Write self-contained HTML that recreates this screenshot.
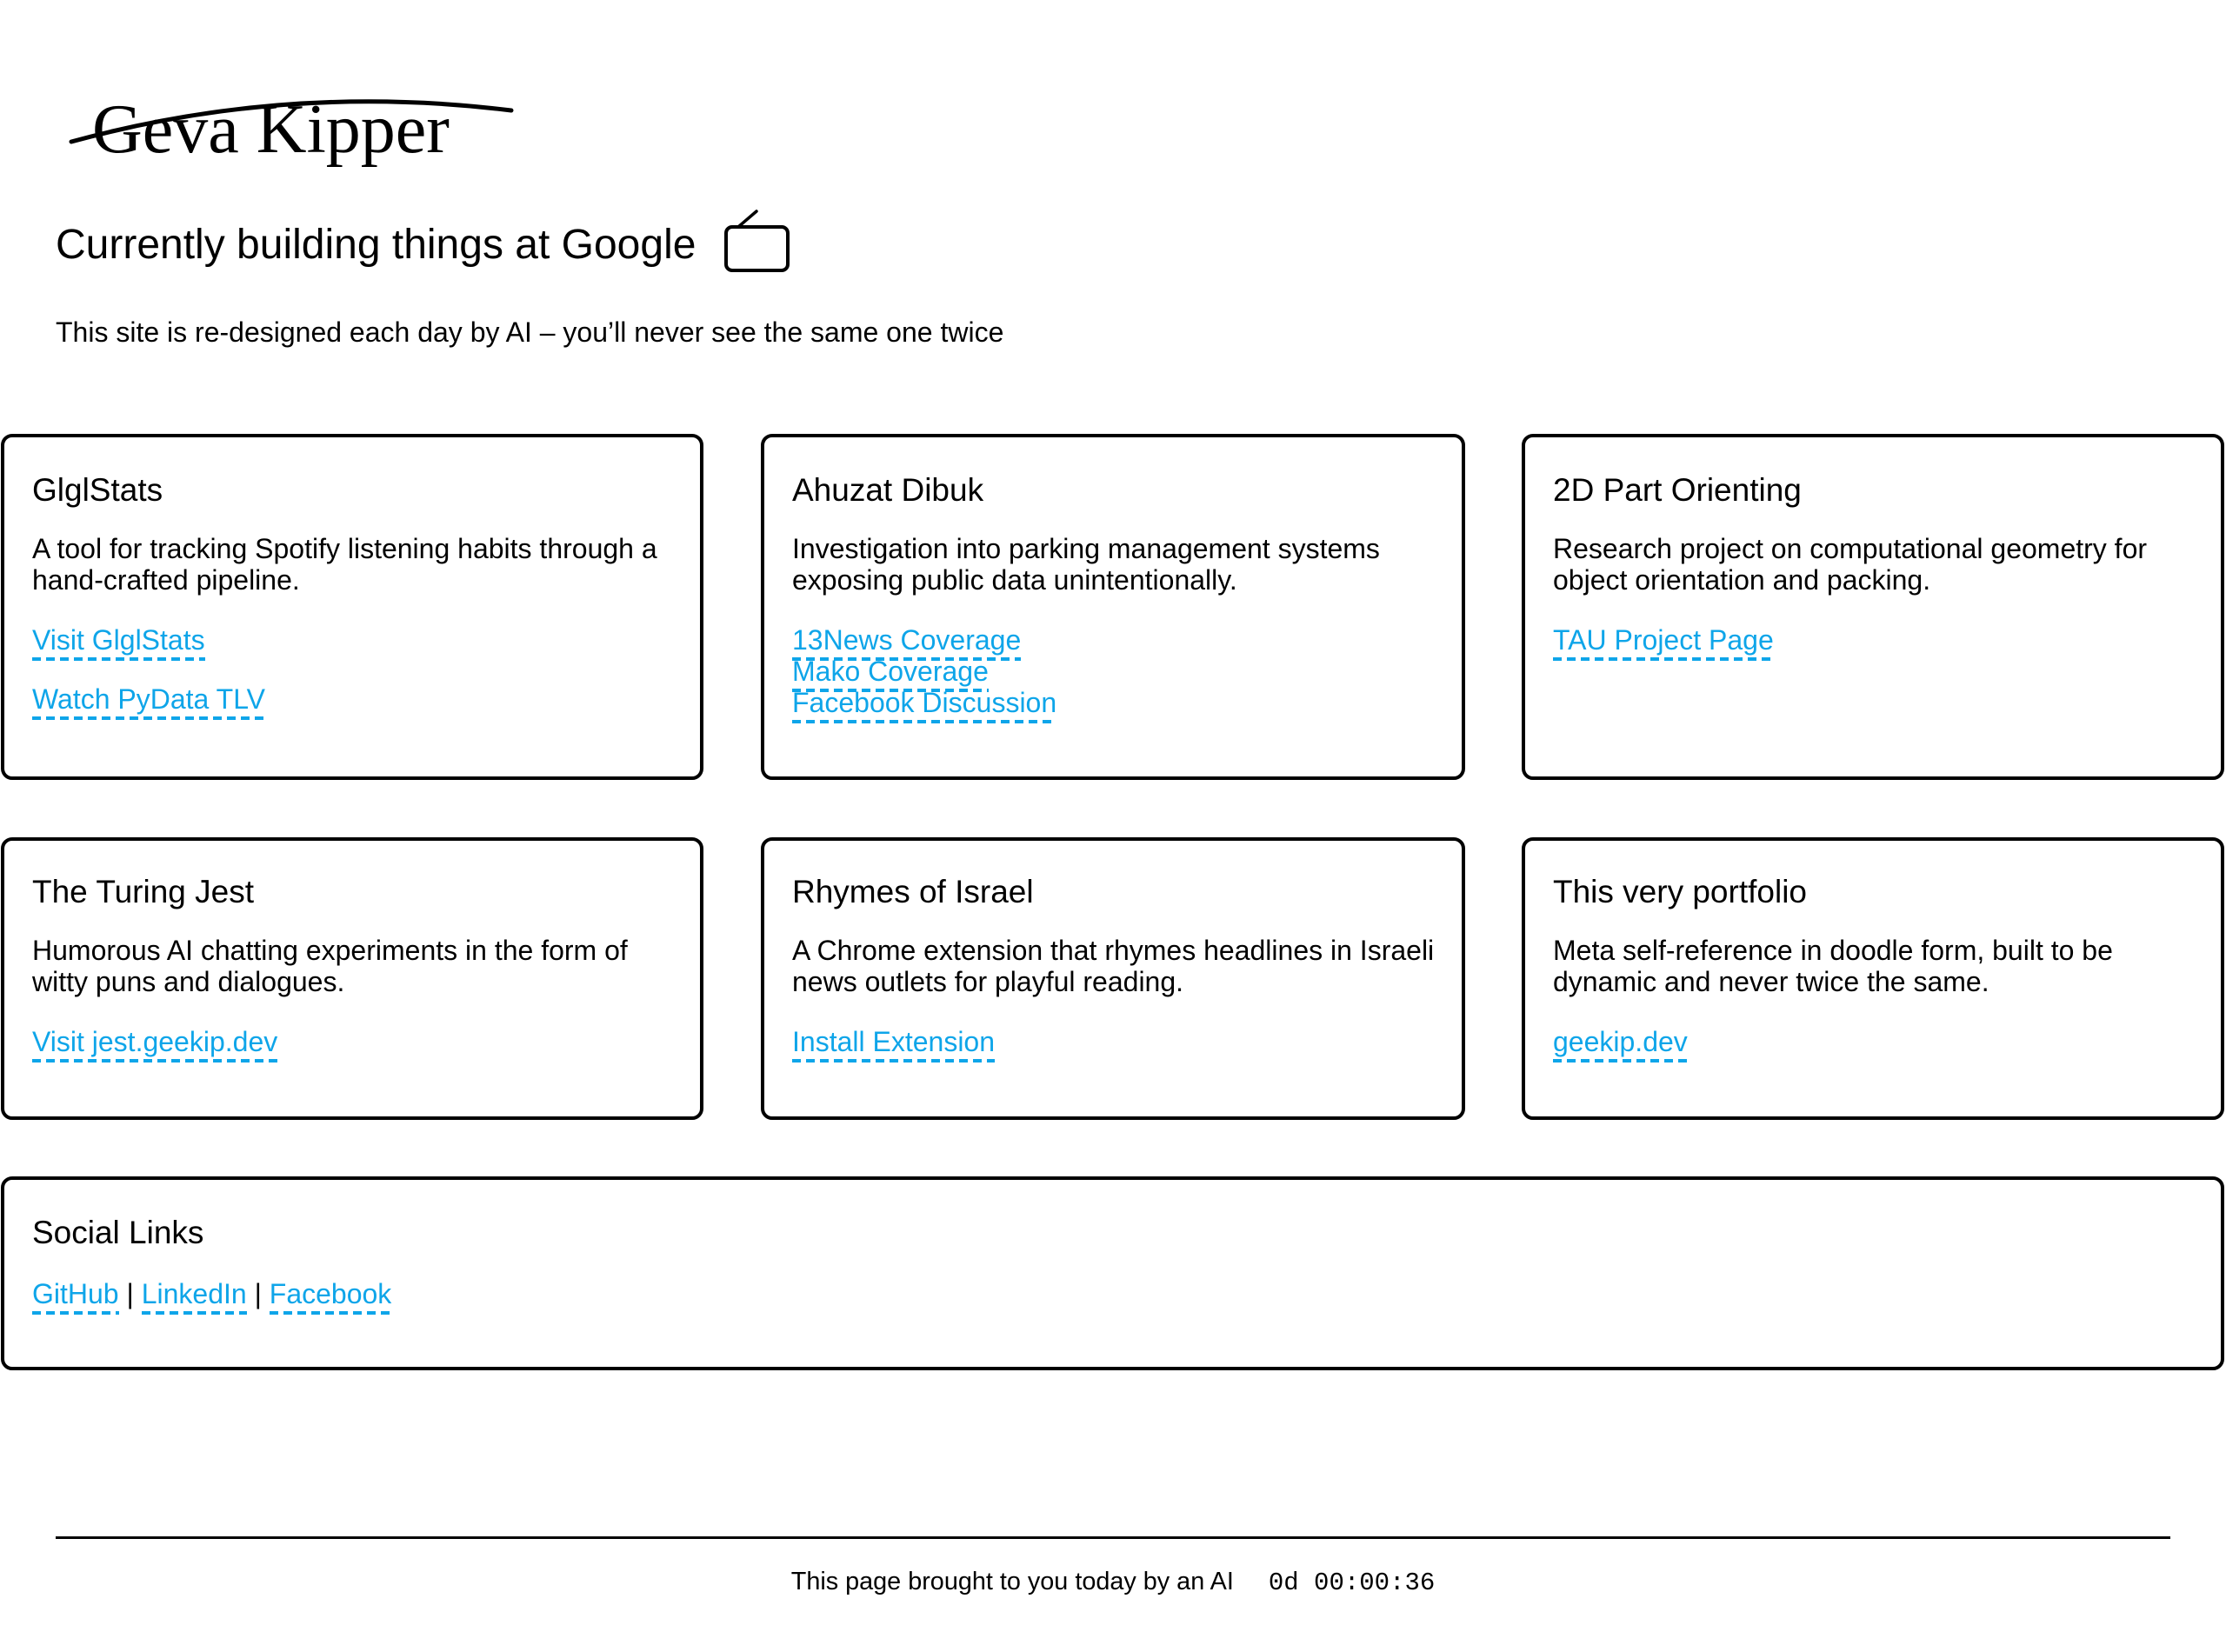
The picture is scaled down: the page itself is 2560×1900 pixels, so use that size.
<!DOCTYPE html>
<html><head><meta charset="utf-8"><style>
html,body{margin:0;padding:0;background:#fff;width:2560px;height:1900px;overflow:hidden;position:relative;font-family:"Liberation Sans",sans-serif;color:#000}
.abs{position:absolute}
.title{left:106px;top:109px;font-family:"Liberation Serif",serif;font-size:80px;line-height:1;white-space:nowrap}
.sub{left:64px;top:258px;font-size:48px;line-height:1;white-space:nowrap}
.desc{left:64px;top:366px;font-size:32px;line-height:1;white-space:nowrap}
.card{position:absolute;box-sizing:border-box;border:4px solid #000;border-radius:13px;padding:42px 20px 0 32px}
.card h3{margin:0;font-weight:normal;font-size:37px;line-height:1;white-space:nowrap}
.card p{margin:31px 0 0 0;font-size:32px;line-height:36px}
.card .links{margin-top:33px;font-size:32px;line-height:36px}
a{color:#0ea5e9;text-decoration:none;padding-bottom:6px;background:repeating-linear-gradient(90deg,#0ea5e9 0 10px,transparent 10px 16px) left bottom/100% 4px no-repeat}
.lk{display:block}
.lk+.lk{margin-top:32px}
.foot{left:64px;width:2432px;top:1767px;height:3px;background:#000}
.ft{left:0;width:2560px;top:1804px;text-align:center;font-size:28.8px;line-height:30px;white-space:nowrap}
.ft span{font-family:"Liberation Mono",monospace;font-size:29px;margin-left:40px}
</style></head><body>
<div class="abs title">Geva Kipper</div>
<svg class="abs" style="left:0;top:0" width="1000" height="330" viewBox="0 0 1000 330">
<path d="M82 163 Q330 95 588 127" fill="none" stroke="#000" stroke-width="5" stroke-linecap="round"/>
<rect x="835" y="261" width="71" height="50" rx="7" fill="none" stroke="#000" stroke-width="4"/>
<path d="M849 261 L870 243" stroke="#000" stroke-width="3.5" stroke-linecap="round"/>
</svg>
<div class="abs sub">Currently building things at Google</div>
<div class="abs desc">This site is re-designed each day by AI – you’ll never see the same one twice</div>

<div class="card" style="left:1px;top:499px;width:808px;height:398px">
<h3>GlglStats</h3>
<p>A tool for tracking Spotify listening habits through a hand-crafted pipeline.</p>
<div class="links"><div class="lk"><a>Visit GlglStats</a></div><div class="lk"><a>Watch PyData TLV</a></div></div>
</div>
<div class="card" style="left:875px;top:499px;width:810px;height:398px">
<h3>Ahuzat Dibuk</h3>
<p>Investigation into parking management systems exposing public data unintentionally.</p>
<div class="links"><a>13News Coverage</a><br><a>Mako Coverage</a><br><a>Facebook Discussion</a></div>
</div>
<div class="card" style="left:1750px;top:499px;width:808px;height:398px">
<h3>2D Part Orienting</h3>
<p>Research project on computational geometry for object orientation and packing.</p>
<div class="links"><a>TAU Project Page</a></div>
</div>

<div class="card" style="left:1px;top:963px;width:808px;height:325px;padding-top:40px">
<h3>The Turing Jest</h3>
<p>Humorous AI chatting experiments in the form of witty puns and dialogues.</p>
<div class="links"><a>Visit jest.geekip.dev</a></div>
</div>
<div class="card" style="left:875px;top:963px;width:810px;height:325px;padding-top:40px">
<h3>Rhymes of Israel</h3>
<p>A Chrome extension that rhymes headlines in Israeli news outlets for playful reading.</p>
<div class="links"><a>Install Extension</a></div>
</div>
<div class="card" style="left:1750px;top:963px;width:808px;height:325px;padding-top:40px">
<h3>This very portfolio</h3>
<p>Meta self-reference in doodle form, built to be dynamic and never twice the same.</p>
<div class="links"><a>geekip.dev</a></div>
</div>

<div class="card" style="left:1px;top:1353px;width:2557px;height:223px">
<h3>Social Links</h3>
<div class="links" style="margin-top:34px"><a>GitHub</a> | <a>LinkedIn</a> | <a>Facebook</a></div>
</div>

<div class="abs foot"></div>
<div class="abs ft">This page brought to you today by an AI<span>0d 00:00:36</span></div>
</body></html>
